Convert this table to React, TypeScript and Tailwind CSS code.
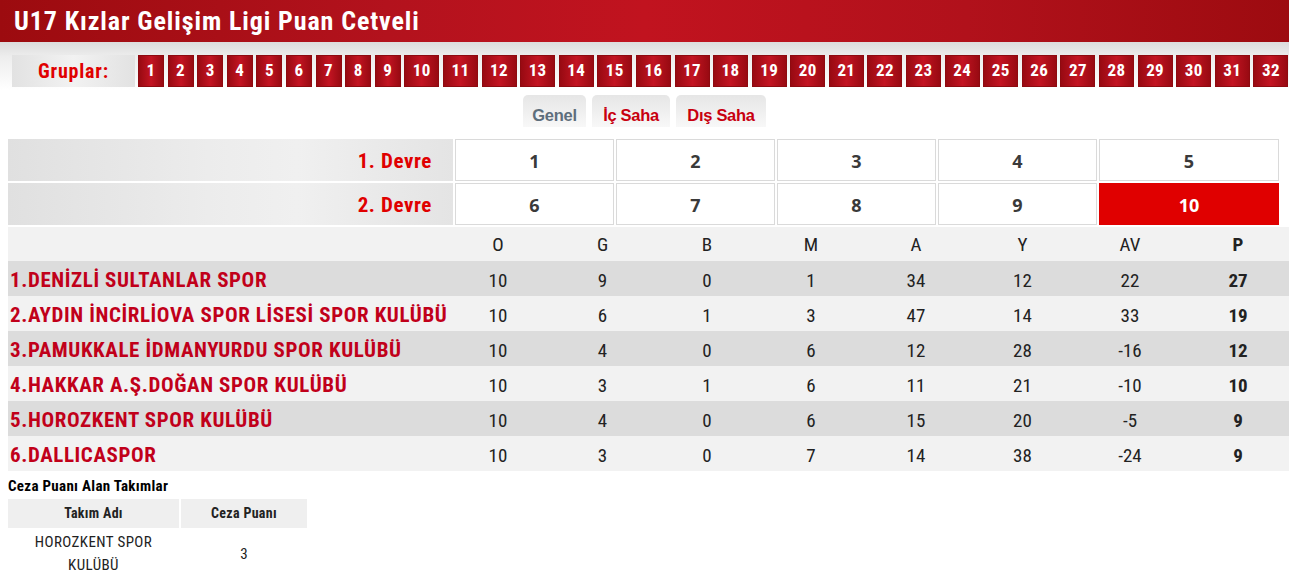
import React from 'react'

const groups = Array.from({ length: 32 }, (_, i) => i + 1)

const devre1 = [1, 2, 3, 4, 5]
const devre2 = [6, 7, 8, 9, 10]

const teams = [
  { name: '1.DENİZLİ SULTANLAR SPOR', o: 10, g: 9, b: 0, m: 1, a: 34, y: 12, av: 22, p: 27 },
  { name: '2.AYDIN İNCİRLİOVA SPOR LİSESİ SPOR KULÜBÜ', o: 10, g: 6, b: 1, m: 3, a: 47, y: 14, av: 33, p: 19 },
  { name: '3.PAMUKKALE İDMANYURDU SPOR KULÜBÜ', o: 10, g: 4, b: 0, m: 6, a: 12, y: 28, av: -16, p: 12 },
  { name: '4.HAKKAR A.Ş.DOĞAN SPOR KULÜBÜ', o: 10, g: 3, b: 1, m: 6, a: 11, y: 21, av: -10, p: 10 },
  { name: '5.HOROZKENT SPOR KULÜBÜ', o: 10, g: 4, b: 0, m: 6, a: 15, y: 20, av: -5, p: 9 },
  { name: '6.DALLICASPOR', o: 10, g: 3, b: 0, m: 7, a: 14, y: 38, av: -24, p: 9 },
]

const cols = 'grid grid-cols-[438px_104px_105px_104px_104px_106px_107px_108px_108px]'

const DevreRow = ({ label, nums, active }: { label: string; nums: number[]; active?: number }) => (
  <div className="grid grid-cols-[445px_159px_159px_159px_159px_180px] gap-[2px] h-[42px]">
    <div className="flex items-center justify-end pr-[21px] pt-[3px] bg-[linear-gradient(90deg,#e0e0e0_0%,#ececec_45%,#f0f0f0_65%,#e4e4e4_100%)] text-[#e00000] font-bold text-[21px] tracking-[0.6px]">
      {label}
    </div>
    {nums.map((n) =>
      n === active ? (
        <div key={n} className="flex items-center justify-center pt-[3px] bg-[#e00000] text-white font-['Open_Sans'] font-bold text-[18px]">
          {n}
        </div>
      ) : (
        <div key={n} className="flex items-center justify-center pt-[3px] bg-white border border-[#dadada] text-[#3a3a3a] font-['Open_Sans'] font-bold text-[18px]">
          {n}
        </div>
      )
    )}
  </div>
)

export default function App() {
  return (
    <div className="w-[1289px] overflow-hidden bg-white font-['Roboto_Condensed',Roboto,sans-serif] text-[#222]">
      <div className="h-[42px] flex items-center pl-[14px] bg-[linear-gradient(90deg,#9c0b0f_0%,#b3121d_30%,#c1131f_50%,#b1111b_75%,#9d0b10_100%)]">
        <h1 className="text-white font-bold text-[26px] tracking-[0.9px]">U17 Kızlar Gelişim Ligi Puan Cetveli</h1>
      </div>

      <div className="h-[48px] pt-[13px] bg-[linear-gradient(180deg,#dcdcdc_0%,#ededed_30%,#ffffff_100%)] flex gap-[3px] pl-[12px]">
        <div className="w-[123px] h-[32px] flex items-center justify-center bg-[linear-gradient(90deg,#e2e2e2,#f2f2f2_50%,#e2e2e2)] text-[#e00000] font-bold text-[20px] tracking-[0.8px]">
          Gruplar:
        </div>
        <div className="flex gap-[3.6px]">
          {groups.map((g) => (
            <div
              key={g}
              className={`${g < 10 ? 'w-[26px]' : 'w-[35px]'} h-[32px] flex items-center justify-center border border-[#8e0a10] bg-[linear-gradient(90deg,#980a12_0%,#c31422_50%,#980a12_100%)] text-white font-bold text-[17px] tracking-[0.4px]`}
            >
              {g}
            </div>
          ))}
        </div>
      </div>

      <div className="flex justify-center gap-[6px] pt-[5px] h-[49px] font-['Liberation_Sans',Arial,sans-serif] font-bold text-[16.5px]">
        <div className="w-[63px] h-[32px] pt-[8px] text-center rounded-t-[5px] bg-[linear-gradient(180deg,#e6e6e6,#f8f8f8)] text-[#5e6e7c] tracking-[-0.3px]">Genel</div>
        <div className="w-[78px] h-[32px] pt-[8px] text-center rounded-t-[5px] bg-[linear-gradient(180deg,#e6e6e6,#f8f8f8)] text-[#c8000f] tracking-[-0.3px]">İç Saha</div>
        <div className="w-[90px] h-[32px] pt-[8px] text-center rounded-t-[5px] bg-[linear-gradient(180deg,#e6e6e6,#f8f8f8)] text-[#c8000f] tracking-[-0.3px]">Dış Saha</div>
      </div>

      <div className="ml-[8px] flex flex-col gap-[2px]">
        <DevreRow label="1. Devre" nums={devre1} />
        <DevreRow label="2. Devre" nums={devre2} active={10} />
      </div>

      <div className="ml-[8px] mt-[2px]">
        <div className={`${cols} h-[34px] pt-[3px] bg-[#f2f2f2] items-center text-[19px]`}>
          <div />
          <div className="text-center">O</div>
          <div className="text-center">G</div>
          <div className="text-center">B</div>
          <div className="text-center">M</div>
          <div className="text-center">A</div>
          <div className="text-center">Y</div>
          <div className="text-center">AV</div>
          <div className="text-center font-bold">P</div>
        </div>
        {teams.map((t, i) => (
          <div key={t.name} className={`${cols} h-[35px] pt-[4px] items-center text-[19px] ${i % 2 === 0 ? 'bg-[#dcdcdc]' : 'bg-[#f2f2f2]'}`}>
            <div className="pl-[2px] text-[#c1001a] font-bold text-[21px] tracking-[0.6px] whitespace-nowrap">{t.name}</div>
            <div className="text-center">{t.o}</div>
            <div className="text-center">{t.g}</div>
            <div className="text-center">{t.b}</div>
            <div className="text-center">{t.m}</div>
            <div className="text-center">{t.a}</div>
            <div className="text-center">{t.y}</div>
            <div className="text-center">{t.av}</div>
            <div className="text-center font-bold">{t.p}</div>
          </div>
        ))}
      </div>

      <div className="ml-[8px] mt-[5px]">
        <div className="font-bold text-[15px] text-black leading-[20px] tracking-[0.3px]">Ceza Puanı Alan Takımlar</div>
        <div className="mt-[3px] grid grid-cols-[171px_126px] gap-x-[2px] w-[299px] text-[15px]">
          <div className="h-[29px] flex items-center justify-center bg-[#efefef] font-bold text-[14px] tracking-[0.3px]">Takım Adı</div>
          <div className="h-[29px] flex items-center justify-center bg-[#efefef] font-bold text-[14px] tracking-[0.3px]">Ceza Puanı</div>
          <div className="pt-[3px] px-[14px] text-center leading-[23px] tracking-[0.4px]">HOROZKENT SPOR KULÜBÜ</div>
          <div className="flex items-center justify-center pt-[3px]">3</div>
        </div>
      </div>
    </div>
  )
}
